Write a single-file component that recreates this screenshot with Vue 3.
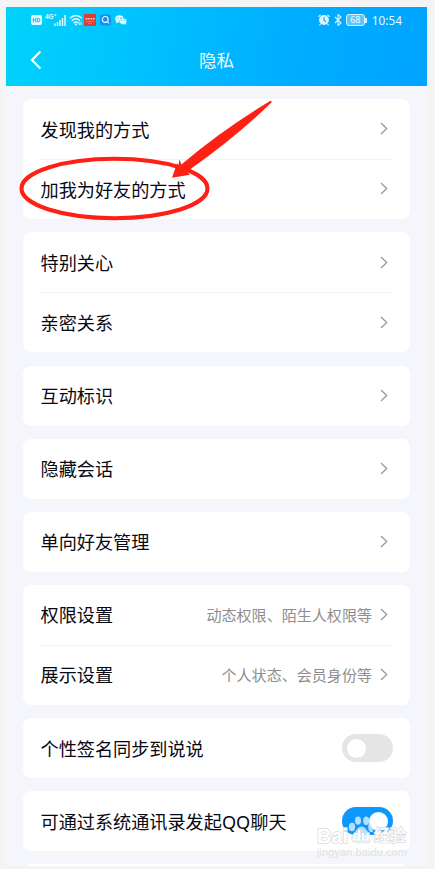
<script setup>
import { ref } from 'vue';

const groups = ref([
  [{ label: '发现我的方式' }, { label: '加我为好友的方式' }],
  [{ label: '特别关心' }, { label: '亲密关系' }],
  [{ label: '互动标识' }],
  [{ label: '隐藏会话' }],
  [{ label: '单向好友管理' }],
  [
    { label: '权限设置', hint: '动态权限、陌生人权限等' },
    { label: '展示设置', hint: '个人状态、会员身份等' },
  ],
  [{ label: '个性签名同步到说说', toggle: true, on: false }],
  [{ label: '可通过系统通讯录发起QQ聊天', toggle: true, on: true }],
  [{ label: '' }],
]);

const handleClick = (row) => {
  if (row.toggle) row.on = !row.on;
};
</script>

<template>
  <div class="page">
    <div class="screen">
      <header class="header">
        <div class="status">
          <div class="status-left">
            <svg class="hd" viewBox="0 0 11 10">
              <rect width="11" height="10" rx="2" fill="#e4fbff" />
              <path
                d="M2.3 2.8v4.6M4.8 2.8v4.6M2.3 5h2.5M6.6 3.2v3.8h.8q1.5 0 1.5-1.9t-1.5-1.9z"
                fill="none"
                stroke="#17b9e8"
                stroke-width="1"
              />
            </svg>
            <span class="net">4G⁺</span>
            <svg class="signal" viewBox="0 0 12 11">
              <path
                d="M1 8.5v2.5M3.5 7v4M6 5v6M8.5 3v8M11 0v11"
                stroke="#e4fbff"
                stroke-width="1.4"
              />
            </svg>
            <svg class="wifi" viewBox="0 0 14 12">
              <g fill="none" stroke="#e4fbff" stroke-width="1.4">
                <path d="M.8 4.3q6-5.6 12.2 0M2.8 6.7q4.1-3.9 8.2 0M4.6 8.9q2.3-2 4.6 0" />
              </g>
              <circle cx="6.9" cy="10.5" r="1" fill="#e4fbff" />
              <path d="M10.2 8v3M12 8v3" stroke="#e4fbff" stroke-width=".9" />
            </svg>
            <svg class="app" viewBox="0 0 12 12">
              <rect width="12" height="12" fill="#d8403a" />
              <path d="M1.5 4.7h2M4 4.7h1.8M6.5 4.7h1.8M9 4.7h1.7" stroke="#f5c6a0" stroke-width="1.6" />
              <path d="M2 7.5h8M4 9.5h4" stroke="#e98678" stroke-width=".7" />
            </svg>
            <svg class="search" viewBox="0 0 12 12">
              <rect width="12" height="12" rx="2.5" fill="#138ff0" />
              <circle cx="5.7" cy="5.4" r="3.2" fill="none" stroke="#e4fbff" stroke-width="1.2" />
              <path d="M7.9 7.8l2 2" stroke="#e4fbff" stroke-width="1.2" />
            </svg>
            <svg class="wechat" viewBox="0 0 12 10">
              <g fill="#e4fbff">
                <ellipse cx="4.4" cy="3.8" rx="4.2" ry="3.6" />
                <path d="M1.3 6l-.2 2.2 2-1z" />
                <ellipse cx="8.1" cy="6.3" rx="3.7" ry="3.1" stroke="#12bdf5" stroke-width=".5" />
                <path d="M9.5 8.5l1.4 1.4v-2.5z" />
              </g>
              <g fill="#12bdf5">
                <circle cx="3" cy="2.9" r=".55" />
                <circle cx="5.8" cy="2.9" r=".55" />
                <circle cx="7" cy="5.5" r=".5" />
                <circle cx="9.3" cy="5.5" r=".5" />
              </g>
            </svg>
          </div>
          <div class="status-right">
            <svg class="alarm" viewBox="0 0 12 12">
              <circle cx="6" cy="6" r="4.9" fill="#dcf4ff" />
              <path d="M.5 2.8L2.6.9M11.5 2.8L9.4.9M2.5 10l-1 1.3M9.5 10l1 1.3" stroke="#dcf4ff" stroke-width="1.2" />
              <path d="M6 3v3.3l2 1.5" fill="none" stroke="#08a8f8" stroke-width="1.1" />
            </svg>
            <svg class="bluetooth" viewBox="0 0 8 12">
              <path d="M1 3l6 6-3 2.4V.6L7 3 1 9" fill="none" stroke="#dcf4ff" stroke-width="1.1" />
            </svg>
            <span class="battery">68</span>
            <span class="time">10:54</span>
          </div>
        </div>
        <div class="nav">
          <svg class="back" viewBox="0 0 12 20">
            <path d="M10.3 1.5L2 10l8.3 8.5" fill="none" stroke="#fff" stroke-width="2.3" />
          </svg>
          <h1 class="title">隐私</h1>
        </div>
      </header>

      <main class="list">
        <section v-for="(group, i) in groups" :key="i" class="card">
          <div
            v-for="row in group"
            :key="row.label"
            class="row"
            @click="handleClick(row)"
          >
            <span class="label">{{ row.label }}</span>
            <span v-if="row.hint" class="hint">{{ row.hint }}</span>
            <span v-if="row.toggle" class="switch" :class="{ on: row.on }">
              <span class="knob"></span>
            </span>
            <svg v-else class="arrow" viewBox="0 0 8 13">
              <path d="M1 1l5.7 5.5L1 12" fill="none" stroke="#999" stroke-width="1.3" />
            </svg>
          </div>
        </section>
      </main>
    </div>

    <!-- red marker over the second row -->
    <svg class="marker" viewBox="0 0 435 869">
      <ellipse cx="114.5" cy="188.5" rx="93" ry="29.7" fill="none" stroke="#ff2015" stroke-width="4.1" />
      <path
        d="M172 177.7L177 163.5L178.7 165L179.4 159.3L181.4 164.5Q222 130 270.5 100.8L272 102Q236 137 190.5 169L187.5 172L190 174.7Z"
        fill="#ff2015"
      />
    </svg>

    <div class="watermark">
      <svg class="paw" viewBox="0 0 28 28">
        <g fill="#b5dfff">
          <ellipse cx="4" cy="11" rx="3.1" ry="4.2" />
          <ellipse cx="10" cy="4.6" rx="3" ry="4.2" />
          <ellipse cx="18.2" cy="4.8" rx="3" ry="4.2" />
          <path d="M20.5 8q4 1 4.5 8h-3q-2.5-3-1.5-8z" />
          <path d="M13.5 10.5q3 0 5 3.5l4 5h-18l4-5q2-3.5 5-3.5z" />
        </g>
        <path
          d="M4.5 19Q2 23 5 26Q9 28 13.5 26.5Q18 28 22 26Q25 23 22.5 19"
          fill="#fff"
          stroke="#e0e0e0"
          stroke-width=".8"
        />
      </svg>
      <div class="brand">
        <span class="bai">Bai</span>
        <span class="du">du</span>
        <span class="jy">经验</span>
      </div>
      <div class="site">jingyan.baidu.com</div>
    </div>
  </div>
</template>

<style>
body {
  margin: 0;
  background: #f4f4f4;
}
</style>

<style scoped>
.page {
  position: relative;
  box-sizing: border-box;
  width: 435px;
  height: 869px;
  padding: 7px 8px 3px 6px;
  overflow: hidden;
  background: #f4f4f4;
  font-family: 'Noto Sans', 'Noto Sans CJK SC', sans-serif;
}
.screen {
  height: 859px;
  overflow: hidden;
  background: #f5f6fb;
}
.header {
  height: 79.3px;
  background: linear-gradient(100deg, #00d3fb 0%, #00c0ff 35%, #00adff 68%, #00a4ff 100%);
}
.status {
  display: flex;
  justify-content: space-between;
  height: 26px;
  padding: 0 25px 0 25px;
  color: #e4fbff;
}
.status-left,
.status-right {
  display: flex;
  align-items: center;
}
.status svg {
  display: block;
  flex: none;
}
.hd {
  width: 11px;
  height: 10px;
}
.net {
  align-self: flex-start;
  width: 10px;
  margin: 6px 0 0 3px;
  font: 700 6.5px/7px 'Liberation Sans', sans-serif;
  white-space: nowrap;
}
.signal {
  width: 12px;
  height: 11px;
  margin-left: -1px;
}
.wifi {
  width: 14px;
  height: 12px;
  margin-left: 3px;
}
.app {
  width: 12px;
  height: 12px;
  margin-left: 1px;
}
.search {
  width: 11px;
  height: 12px;
  margin-left: 4px;
}
.wechat {
  width: 12px;
  height: 10px;
  margin-left: 4px;
}
.alarm {
  width: 12px;
  height: 12px;
}
.bluetooth {
  width: 8px;
  height: 12px;
  margin-left: 3.5px;
}
.battery {
  position: relative;
  box-sizing: border-box;
  width: 19px;
  height: 12px;
  margin-left: 4px;
  border: 1px solid #dcf4ff;
  border-radius: 3px;
  background: #5cc4fb;
  color: #fff;
  font: 9px/10px 'Open Sans', sans-serif;
  text-align: center;
}
.battery::after {
  content: '';
  position: absolute;
  top: 3px;
  right: -3px;
  width: 1.5px;
  height: 5px;
  background: #dcf4ff;
}
.time {
  margin-left: 7px;
  font-size: 11.8px;
  line-height: 16px;
}
.nav {
  display: grid;
  grid-template-columns: 60px 1fr 60px;
  align-items: center;
  height: 54px;
}
.back {
  width: 12px;
  height: 20px;
  margin-left: 24px;
}
.title {
  margin: -2px 0 0;
  color: #eefaff;
  font-size: 17.5px;
  font-weight: 400;
  text-align: center;
}
.list {
  display: flex;
  flex-direction: column;
  gap: 13.1px;
  padding: 13.1px 17px 0;
}
.card {
  flex: none;
  border-radius: 8px;
  background: #fff;
}
.row {
  display: flex;
  align-items: center;
  position: relative;
  box-sizing: border-box;
  height: 60px;
  padding: 1.2px 17.5px 0 17.5px;
}
.row + .row::before {
  content: '';
  position: absolute;
  top: 0;
  left: 17px;
  right: 17px;
  height: 1px;
  background: #f4f4f6;
}
.label {
  flex: 1;
  color: #080812;
  font-size: 18.15px;
  line-height: 26px;
  white-space: nowrap;
}
.hint {
  margin: -1px 8px 0 0;
  color: #8e8e8e;
  font-size: 15.05px;
  line-height: 22px;
  white-space: nowrap;
}
.arrow {
  width: 8px;
  height: 13px;
  margin: -2px 4.5px 0 0;
}
.switch {
  box-sizing: border-box;
  width: 50.5px;
  height: 28px;
  margin-top: -1px;
  padding: 4.5px;
  border-radius: 14px;
  background: #e5e5e5;
}
.knob {
  display: block;
  width: 19px;
  height: 19px;
  border-radius: 50%;
  background: #fff;
}
.switch.on {
  background: #0c98fd;
}
.switch.on .knob {
  margin-left: auto;
}
.marker {
  position: absolute;
  top: 0;
  left: 0;
  width: 435px;
  height: 869px;
  pointer-events: none;
}
.watermark {
  position: absolute;
  top: 815px;
  left: 317px;
  width: 92px;
  height: 44px;
  color: #fff;
  pointer-events: none;
}
.brand {
  position: relative;
  display: flex;
  align-items: center;
  height: 20px;
  padding-top: 11px;
  font: 700 20px/20px 'Liberation Sans', 'Noto Sans CJK SC', sans-serif;
  -webkit-text-stroke: 1.6px #dcdcdc;
  paint-order: stroke fill;
}
.bai {
  width: 31px;
}
.du {
  width: 26px;
  font-size: 14px;
  text-align: center;
  -webkit-text-stroke: 1.4px #c5dff2;
}
.jy {
  font-size: 16px;
  font-weight: 500;
}
.site {
  color: #e2e2e2;
  font: 11px/12px 'Liberation Sans', sans-serif;
  letter-spacing: 0.08px;
  white-space: nowrap;
}
.paw {
  position: absolute;
  top: 1px;
  left: 31px;
  width: 28px;
  height: 28px;
}
</style>
